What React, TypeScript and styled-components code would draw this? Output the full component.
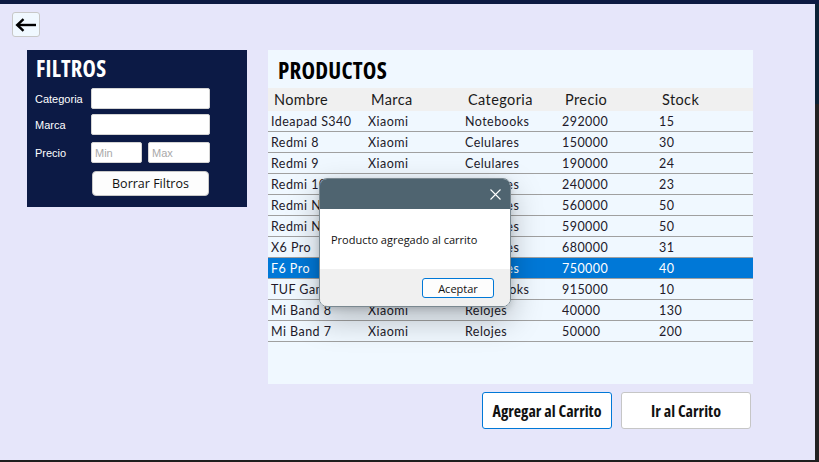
import React from "react";
import styled, { createGlobalStyle } from "styled-components";

const Global = createGlobalStyle`
  html, body { margin: 0; padding: 0; background: #1e1e1e; }
  body { width: 819px; height: 462px; overflow: hidden; }
  * { box-sizing: border-box; }
`;

const Frame = styled.div`
  width: 819px;
  height: 462px;
  display: flex;
  flex-direction: column;
  background: #1e1e1e;
`;

const TopBar = styled.div`
  height: 4px;
  background: #0c1a42;
  flex: none;
`;

const WindowRow = styled.div`
  display: flex;
  height: 456px;
`;

const Client = styled.div`
  position: relative;
  width: 815px;
  height: 456px;
  background: #e6e6fa;
  padding: 8px 0 0 12px;
  display: flex;
  flex-direction: column;
`;

const SideStrip = styled.div`
  width: 4px;
  background: linear-gradient(#0b2236 0px, #0b2236 100px, #222 100px);
`;

const BottomStrip = styled.div`
  height: 2px;
  background: #1e1e1e;
`;

const BackButton = styled.button`
  width: 28px;
  height: 25px;
  padding: 0;
  background: #f0f8ff;
  border: 1px solid #c8c8c8;
  border-radius: 3px;
  display: flex;
  align-items: center;
  justify-content: center;
`;

const Content = styled.div`
  display: flex;
  gap: 21px;
  margin-top: 13px;
  margin-left: 15px;
  align-items: flex-start;
`;

const FilterPanel = styled.div`
  width: 220px;
  height: 157px;
  background: #0c1a45;
  padding: 0 0 0 8px;
  display: flex;
  flex-direction: column;
`;

const CondTitle = styled.div<{ $size: number; $color: string }>`
  font-family: "Open Sans", "DejaVu Sans Condensed", sans-serif;
  font-stretch: 75%;
  font-weight: 700;
  font-size: ${(p) => p.$size}px;
  color: ${(p) => p.$color};
  letter-spacing: 0.2px;
`;

const FilterTitle = styled(CondTitle)`
  height: 38px;
  line-height: 38px;
  padding-left: 1px;
`;

const FilterRow = styled.div<{ $mt: number }>`
  display: flex;
  align-items: center;
  height: 21px;
  margin-top: ${(p) => p.$mt}px;
`;

const Label = styled.span`
  width: 56px;
  font-family: "Liberation Sans", Arial, sans-serif;
  font-size: 11px;
  color: #ffffff;
`;

const Input = styled.input<{ $w: number }>`
  width: ${(p) => p.$w}px;
  height: 21px;
  background: #fff;
  border: 1px solid #d4d4d4;
  border-radius: 2px;
  padding: 2px 3px;
  font-family: "Liberation Sans", Arial, sans-serif;
  font-size: 11px;
  outline: none;
  &::placeholder { color: #a9a9a9; }
`;

const PairGap = styled.div`
  width: 6px;
`;

const ClearButton = styled.button`
  margin: 8px 0 0 57px;
  width: 117px;
  height: 25px;
  background: #fdfdfd;
  border: 1px solid #c9c9c9;
  border-radius: 4px;
  font-family: "Open Sans", "Noto Sans", sans-serif;
  font-size: 12.5px;
  color: #111;
  padding: 0;
`;

const ProductsCol = styled.div`
  display: flex;
  flex-direction: column;
  width: 485px;
`;

const ProductsPanel = styled.div`
  width: 485px;
  height: 334px;
  background: #f0f8ff;
  display: flex;
  flex-direction: column;
`;

const ProductsTitle = styled(CondTitle)`
  height: 38px;
  line-height: 40px;
  padding-left: 10px;
`;

const Grid = styled.div`
  display: grid;
  grid-template-columns: repeat(5, 97px);
`;

const HeadCell = styled.div`
  height: 23px;
  line-height: 24px;
  background: #f0f0f0;
  padding-left: 6px;
  font-family: "Lato", "Open Sans", sans-serif;
  font-size: 14.5px;
  color: #1a1a1a;
  letter-spacing: 0.4px;
`;

const Cell = styled.div<{ $sel: boolean }>`
  height: 21px;
  line-height: 21px;
  padding-left: 3px;
  border-bottom: 1px solid #a0a0a0;
  background: ${(p) => (p.$sel ? "#0078d7" : "transparent")};
  color: ${(p) => (p.$sel ? "#ffffff" : "#221a2a")};
  font-family: "Lato", "Open Sans", sans-serif;
  font-size: 12.5px;
  letter-spacing: 0.45px;
  white-space: nowrap;
  overflow: hidden;
`;

const ButtonRow = styled.div`
  display: flex;
  justify-content: flex-end;
  gap: 9px;
  margin-top: 8px;
  padding-right: 2px;
`;

const BigButton = styled.button<{ $focus: boolean }>`
  width: 130px;
  height: 37px;
  background: #fff;
  border: 1px solid ${(p) => (p.$focus ? "#0078d7" : "#c6c6c6")};
  border-radius: 3px;
  font-family: "Open Sans", "DejaVu Sans Condensed", sans-serif;
  font-stretch: 75%;
  font-weight: 700;
  font-size: 16px;
  color: #111;
  padding: 0;
`;

const Dialog = styled.div`
  position: absolute;
  left: 319px;
  top: 174px;
  width: 192px;
  height: 129px;
  border-radius: 8px;
  overflow: hidden;
  border: 1px solid #7a8890;
  box-shadow: 0 12px 32px rgba(0, 0, 0, 0.26), 0 2px 6px rgba(0, 0, 0, 0.15);
  display: flex;
  flex-direction: column;
`;

const DialogTitle = styled.div`
  height: 30px;
  background: #4f6470;
  display: flex;
  justify-content: flex-end;
  align-items: center;
  padding-right: 9px;
`;

const DialogBody = styled.div`
  height: 60px;
  background: #ffffff;
  padding: 23px 0 0 11px;
  font-family: "Open Sans", "Noto Sans", sans-serif;
  font-size: 11px;
  color: #111;
`;

const DialogFooter = styled.div`
  flex: 1;
  background: #f0f0f0;
  display: flex;
  justify-content: flex-end;
  align-items: flex-start;
  padding: 9px 16px 0 0;
`;

const OkButton = styled.button`
  width: 72px;
  height: 20px;
  background: #fdfdfd;
  border: 1px solid #0078d7;
  border-radius: 3px;
  font-family: "Open Sans", "Noto Sans", sans-serif;
  font-size: 11px;
  color: #111;
  padding: 0;
`;

type Row = [string, string, string, string, string];

const rows: Row[] = [
  ["Ideapad S340", "Xiaomi", "Notebooks", "292000", "15"],
  ["Redmi 8", "Xiaomi", "Celulares", "150000", "30"],
  ["Redmi 9", "Xiaomi", "Celulares", "190000", "24"],
  ["Redmi 10", "Xiaomi", "Celulares", "240000", "23"],
  ["Redmi Note 12", "Xiaomi", "Celulares", "560000", "50"],
  ["Redmi Note 13", "Xiaomi", "Celulares", "590000", "50"],
  ["X6 Pro", "Poco", "Celulares", "680000", "31"],
  ["F6 Pro", "Poco", "Celulares", "750000", "40"],
  ["TUF Gaming F15", "Asus", "Notebooks", "915000", "10"],
  ["Mi Band 8", "Xiaomi", "Relojes", "40000", "130"],
  ["Mi Band 7", "Xiaomi", "Relojes", "50000", "200"],
];

const headers = ["Nombre", "Marca", "Categoria", "Precio", "Stock"];

export default function App() {
  return (
    <Frame>
      <Global />
      <TopBar />
      <WindowRow>
        <Client>
          <BackButton>
            <svg width="22" height="14" viewBox="0 0 22 14">
              <path d="M21 7H3" stroke="#000" strokeWidth="2.4" fill="none" />
              <path d="M8.5 1.2L2.2 7l6.3 5.8" stroke="#000" strokeWidth="2.4" fill="none" />
            </svg>
          </BackButton>
          <Content>
            <FilterPanel>
              <FilterTitle $size={22.5} $color="#ffffff">FILTROS</FilterTitle>
              <FilterRow $mt={0}>
                <Label>Categoria</Label>
                <Input $w={119} />
              </FilterRow>
              <FilterRow $mt={5}>
                <Label>Marca</Label>
                <Input $w={119} />
              </FilterRow>
              <FilterRow $mt={7}>
                <Label>Precio</Label>
                <Input $w={51} placeholder="Min" />
                <PairGap />
                <Input $w={62} placeholder="Max" />
              </FilterRow>
              <ClearButton>Borrar Filtros</ClearButton>
            </FilterPanel>
            <ProductsCol>
              <ProductsPanel>
                <ProductsTitle $size={23} $color="#000000">PRODUCTOS</ProductsTitle>
                <Grid>
                  {headers.map((h) => (
                    <HeadCell key={h}>{h}</HeadCell>
                  ))}
                  {rows.map((r, i) =>
                    r.map((c, j) => (
                      <Cell key={`${i}-${j}`} $sel={i === 7}>
                        {c}
                      </Cell>
                    ))
                  )}
                </Grid>
              </ProductsPanel>
              <ButtonRow>
                <BigButton $focus={true}>Agregar al Carrito</BigButton>
                <BigButton $focus={false}>Ir al Carrito</BigButton>
              </ButtonRow>
            </ProductsCol>
          </Content>
          <Dialog>
            <DialogTitle>
              <svg width="11" height="11" viewBox="0 0 11 11">
                <path d="M0.5 0.5L10.5 10.5M10.5 0.5L0.5 10.5" stroke="#fff" strokeWidth="1.1" />
              </svg>
            </DialogTitle>
            <DialogBody>Producto agregado al carrito</DialogBody>
            <DialogFooter>
              <OkButton>Aceptar</OkButton>
            </DialogFooter>
          </Dialog>
        </Client>
        <SideStrip />
      </WindowRow>
      <BottomStrip />
    </Frame>
  );
}
